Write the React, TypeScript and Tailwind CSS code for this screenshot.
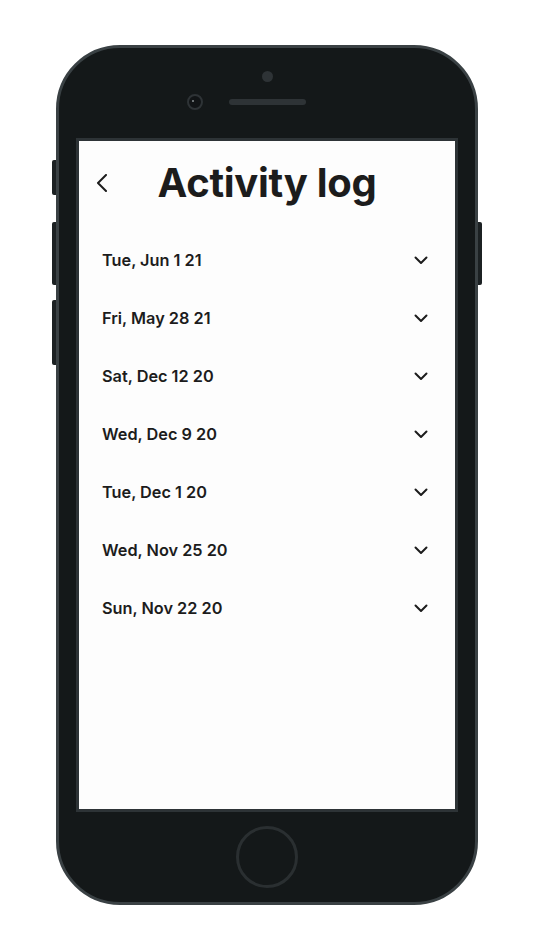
import React from "react";

const days = [
  "Tue, Jun 1 21",
  "Fri, May 28 21",
  "Sat, Dec 12 20",
  "Wed, Dec 9 20",
  "Tue, Dec 1 20",
  "Wed, Nov 25 20",
  "Sun, Nov 22 20",
];

const ChevronDown = () => (
  <svg width="14" height="9" viewBox="0 0 14 9" fill="none">
    <path d="M1.5 1.5L7 7L12.5 1.5" stroke="#1c1c1c" strokeWidth="2" strokeLinecap="round" strokeLinejoin="round" />
  </svg>
);

const ChevronLeft = () => (
  <svg width="12" height="18" viewBox="0 0 12 18" fill="none">
    <path d="M10 1L2 9L10 17" stroke="#1c1c1c" strokeWidth="2" strokeLinecap="round" strokeLinejoin="round" />
  </svg>
);

export default function App() {
  return (
    <div className="min-h-[950px] w-[534px] bg-white pl-[56px] pt-[45px]" style={{ fontFamily: "Inter, 'Noto Sans', sans-serif" }}>
      {/* phone body */}
      <div className="relative flex h-[860px] w-[422px] flex-col rounded-[64px] border-[3px] border-[#3a4144] bg-[#141819]">
        {/* side buttons */}
        <div className="absolute left-[-7px] top-[112px] h-[35px] w-[4px] rounded-l-[2px] bg-[#1c2123]" />
        <div className="absolute left-[-7px] top-[174px] h-[63px] w-[4px] rounded-l-[2px] bg-[#1c2123]" />
        <div className="absolute left-[-7px] top-[252px] h-[65px] w-[4px] rounded-l-[2px] bg-[#1c2123]" />
        <div className="absolute right-[-7px] top-[174px] h-[63px] w-[4px] rounded-r-[2px] bg-[#1c2123]" />

        {/* top bezel */}
        <div className="flex h-[90px] flex-col items-center">
          <div className="mt-[23px] h-[11px] w-[11px] rounded-full bg-[#2e3336]" />
          <div className="relative mt-[12px] flex h-[16px] items-center">
            <div className="absolute left-[-42px] top-0 flex h-[16px] w-[16px] items-center justify-center rounded-full border-2 border-[#2e3336] bg-[#111416]">
              <div className="ml-[-3px] mt-[-3px] h-[2px] w-[2px] rounded-full bg-[#8a9093]" />
            </div>
            <div className="h-[6px] w-[77px] rounded-full bg-[#2e3336]" />
          </div>
        </div>

        {/* screen */}
        <div className="mx-[17px] h-[674px] border-[3px] border-[#2d3336] bg-[#fdfdfd] text-[#1c1c1c]">
          <div className="relative flex h-[84px] items-center justify-center">
            <div className="absolute left-[17px] top-[33px]">
              <ChevronLeft />
            </div>
            <h1 className="text-[40px] font-bold tracking-[-0.3px]">Activity log</h1>
          </div>
          <ul className="mt-[6px]">
            {days.map((d) => (
              <li key={d} className="flex h-[58px] items-center justify-between pl-[23px] pr-[27px]">
                <span className="text-[16.3px] font-semibold">{d}</span>
                <ChevronDown />
              </li>
            ))}
          </ul>
        </div>

        {/* bottom bezel */}
        <div className="flex flex-1 items-center justify-center">
          <div className="h-[62px] w-[62px] rounded-full border-[3px] border-[#2a2f31]" />
        </div>
      </div>
    </div>
  );
}
